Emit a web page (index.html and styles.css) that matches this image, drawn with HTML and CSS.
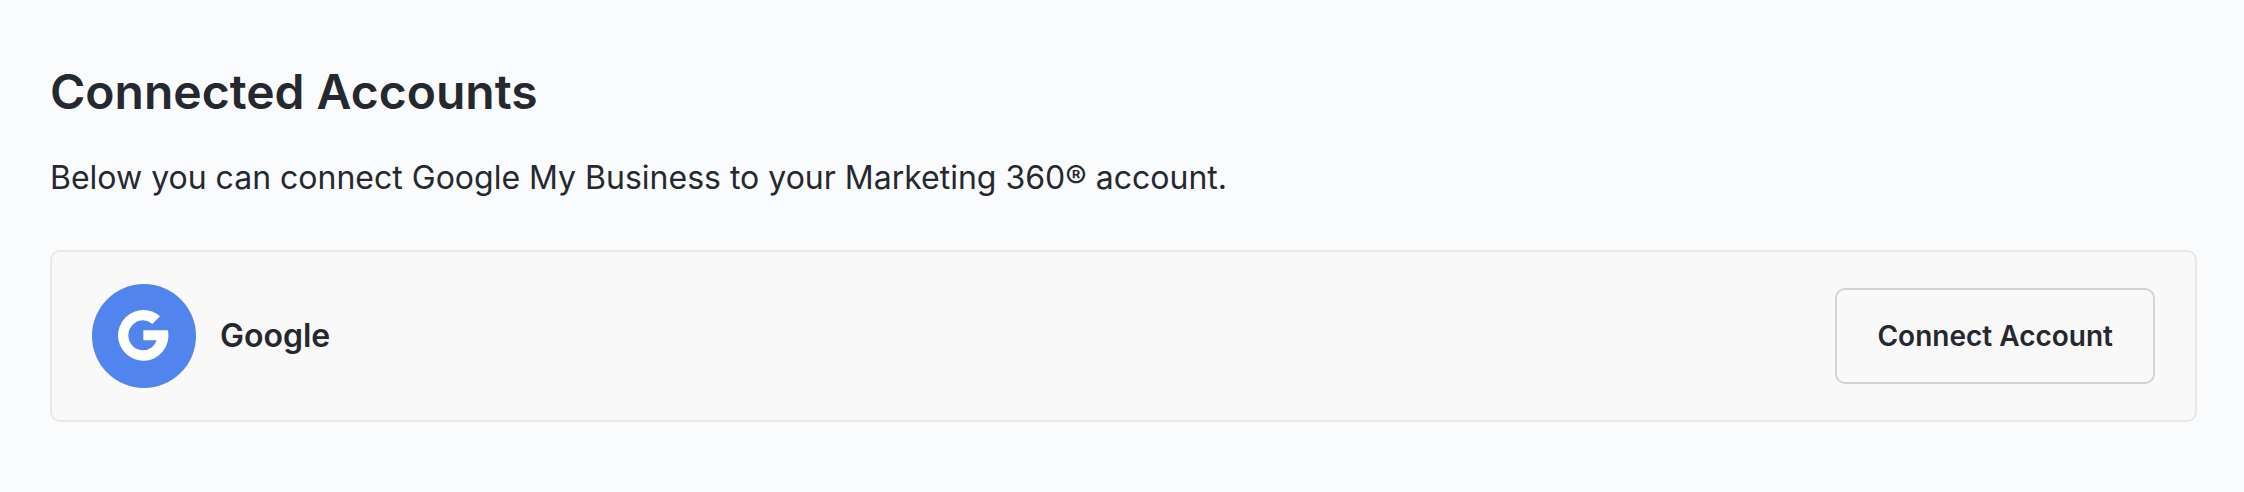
FILE: index.html
```html
<!DOCTYPE html>
<html lang="en">
<head>
    <meta charset="UTF-8">
    <meta name="viewport" content="width=device-width, initial-scale=1.0">
    <title>Connected Accounts</title>
    <link rel="stylesheet" href="styles.css">
</head>
<body>

    <main class="container">
        <h1>Connected Accounts</h1>
        <p class="intro">Below you can connect Google My Business to your Marketing 360® account.</p>

        <div class="account">
            <svg class="account-logo" viewBox="0 0 312 312" aria-hidden="true">
                <circle cx="156" cy="156" r="156" fill="#5284ee"/>
                <path fill="#fff" d="M204 97A76 76 0 0 0 154 78A76 76 0 0 0 154 230A74 76 0 0 0 228 139H154V169H194A42 42 0 0 1 154 199A45 45 0 0 1 154 109A45 45 0 0 1 181 120Z"/>
            </svg>
            <h2 class="account-name">Google</h2>
            <button type="button" class="connect-button">Connect Account</button>
        </div>
    </main>

</body>
</html>
```

FILE: styles.css
```css
body {
    font-family: Inter, sans-serif;
    background-color: #fafbfd;
    color: #26282f;
    margin: 0;
}

.container {
    padding: 64px 47px 64px 50px;
}

h1 {
    margin: 0;
    font-size: 48px;
    line-height: 56px;
    font-weight: 600;
}

.intro {
    margin: 34px 0 48px;
    font-size: 32px;
    line-height: 48px;
}

.account {
    display: flex;
    align-items: center;
    gap: 24px;
    padding: 32px 40px;
    background-color: #f9f9f9;
    border: 2px solid #e8e8e8;
    border-radius: 10px;
}

.account-logo {
    width: 104px;
    height: 104px;
}

.account-name {
    margin: 0;
    font-size: 32px;
    line-height: 48px;
    font-weight: 600;
}

.connect-button {
    margin-left: auto;
    padding: 24px 40px;
    font-family: inherit;
    font-size: 28px;
    line-height: 44px;
    font-weight: 600;
    color: inherit;
    background-color: transparent;
    border: 2px solid #d3d3d3;
    border-radius: 10px;
    cursor: pointer;
}
```
